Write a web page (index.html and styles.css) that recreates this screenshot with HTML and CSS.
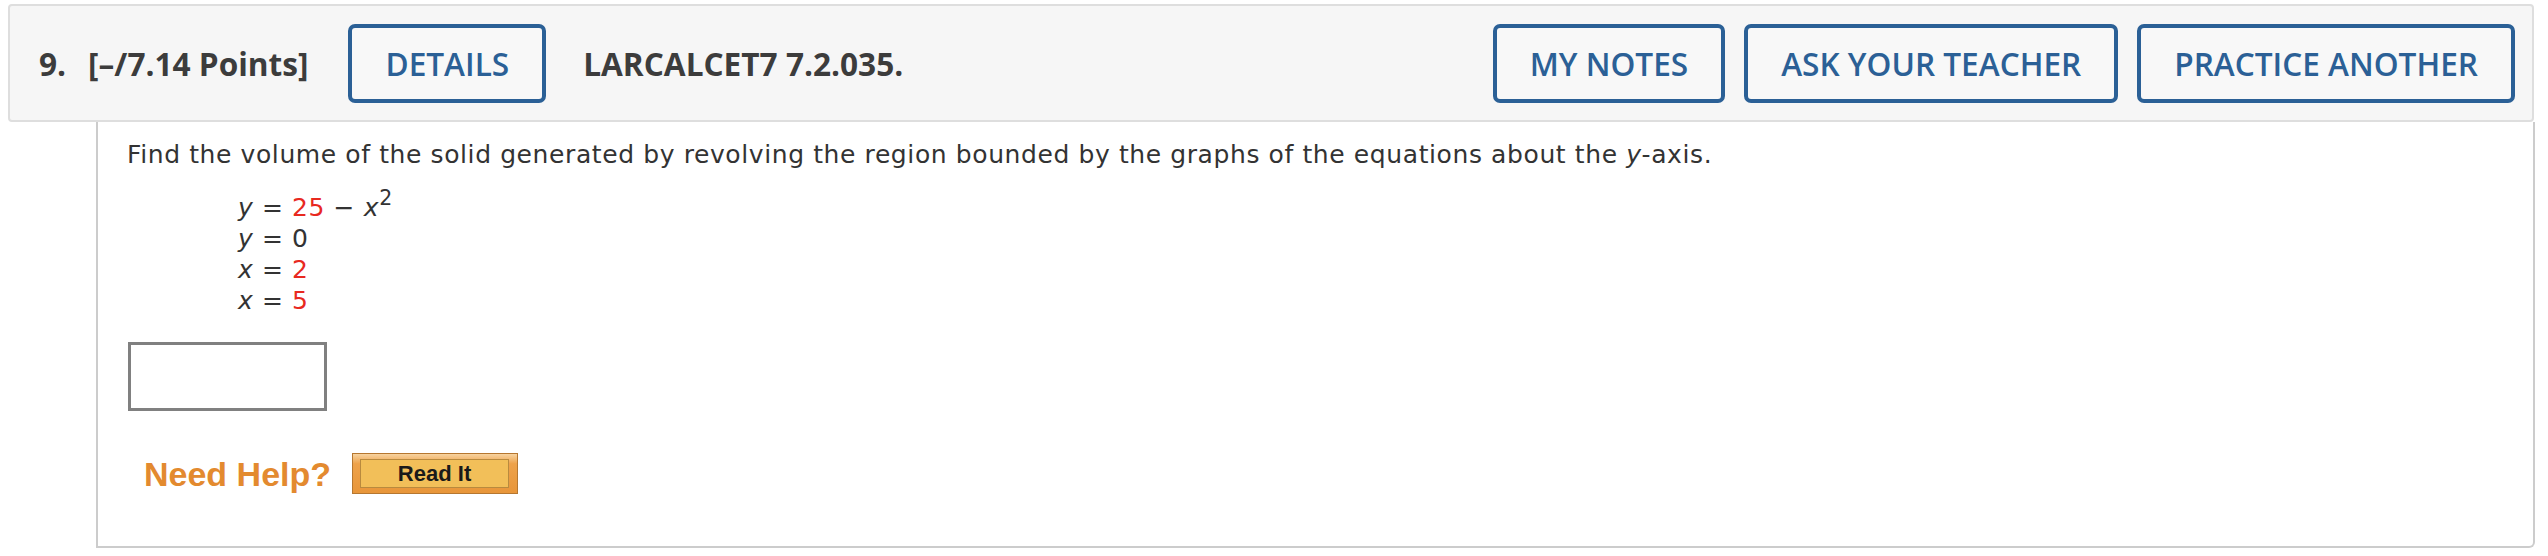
FILE: index.html
```html
<!DOCTYPE html>
<html lang="en">
<head>
<meta charset="utf-8">
<title>Question 9</title>
<link rel="stylesheet" href="styles.css">
</head>
<body>
<div class="question">
  <div class="qhead">
    <span class="qnum">9.</span>
    <span class="points">[–/7.14 Points]</span>
    <button class="btn" type="button">DETAILS</button>
    <span class="code">LARCALCET7 7.2.035.</span>
    <div class="actions">
      <button class="btn" type="button">MY NOTES</button>
      <button class="btn" type="button">ASK YOUR TEACHER</button>
      <button class="btn" type="button">PRACTICE ANOTHER</button>
    </div>
  </div>
  <div class="qbody">
    <p class="prompt">Find the volume of the solid generated by revolving the region bounded by the graphs of the equations about the <i>y</i>-axis.</p>
    <div class="eqs">
      <div class="eq"><i>y</i> = <span class="num">25</span> − <i>x</i><sup>2</sup></div>
      <div class="eq"><i>y</i> = 0</div>
      <div class="eq"><i>x</i> = <span class="num">2</span></div>
      <div class="eq"><i>x</i> = <span class="num">5</span></div>
    </div>
    <input class="answer" type="text" aria-label="answer">
    <div class="help">
      <span class="need">Need Help?</span>
      <button class="readit" type="button"><span class="readit-inner">Read It</span></button>
    </div>
  </div>
</div>
</body>
</html>
```

FILE: styles.css
```css
html, body {
  margin: 0;
  padding: 0;
  background: #ffffff;
}

.question {
  padding-top: 4px;
  width: 2548px;
}

.qhead {
  margin-left: 8px;
  width: 2526px;
  height: 118px;
  box-sizing: border-box;
  border: 2px solid #dedede;
  border-radius: 4px;
  background: #f6f6f6;
  display: flex;
  align-items: center;
  padding: 0 17px 0 29px;
  font-family: "Open Sans", "DejaVu Sans", sans-serif;
}

.qnum,
.points,
.code {
  font-weight: 700;
  font-size: 31.6px;
  color: #3c3c3c;
  white-space: nowrap;
}

.qnum {
  margin-right: 22px;
}

.points {
  margin-right: 40px;
}

.code {
  margin-left: 37px;
}

.btn {
  height: 79px;
  box-sizing: border-box;
  border: 4px solid #2b6096;
  border-radius: 7px;
  padding: 0 33px;
  margin: 0;
  display: flex;
  align-items: center;
  font-family: "Open Sans", "DejaVu Sans", sans-serif;
  font-weight: 600;
  font-size: 31.6px;
  color: #2b6096;
  background: #f8f8f8;
  white-space: nowrap;
}

.actions {
  margin-left: auto;
  display: flex;
  gap: 19px;
}

.qbody {
  margin-left: 96px;
  width: 2439px;
  box-sizing: border-box;
  border: 2px solid #cccccc;
  border-top: none;
  border-radius: 0 0 6px 0;
  padding: 17px 0 52px 29px;
  font-family: "DejaVu Sans", Verdana, sans-serif;
  font-size: 25px;
  letter-spacing: 0.6px;
  line-height: 31px;
  color: #333333;
}

.prompt {
  margin: 0;
}

.eqs {
  margin: 22px 0 0 111px;
}

.eq sup {
  font-size: 0.82em;
  line-height: 0;
  vertical-align: 0.55em;
}

.num {
  color: #e8291f;
}

.answer {
  display: block;
  margin: 26px 0 0 1px;
  width: 199px;
  height: 69px;
  box-sizing: border-box;
  border: 3px solid #808080;
  background: #ffffff;
  padding: 0;
}

.help {
  margin: 42px 0 0 17px;
  display: flex;
  align-items: center;
  gap: 21px;
  height: 41px;
  letter-spacing: 0;
}

.need {
  font-family: "Liberation Sans", Arial, sans-serif;
  font-weight: 700;
  font-size: 34px;
  line-height: 1;
  color: #e38a2f;
}

.readit {
  width: 166px;
  height: 41px;
  box-sizing: border-box;
  margin: 0;
  padding: 5px 8px 5px 7px;
  border: 1px solid #b67730;
  background: linear-gradient(#f7d3a0 0%, #eea24a 25%, #e8963a 100%);
  display: flex;
}

.readit-inner {
  flex: 1;
  display: flex;
  align-items: center;
  justify-content: center;
  border: 1px solid #b98a3e;
  background: #f2bf59;
  font-family: "Liberation Sans", Arial, sans-serif;
  font-weight: 700;
  font-size: 22px;
  color: #1a1a1a;
}
```
